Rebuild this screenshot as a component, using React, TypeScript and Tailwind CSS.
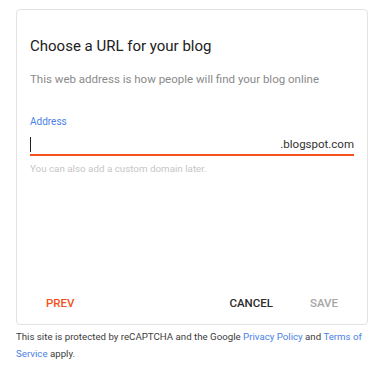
import React from "react";

export default function App() {
  return (
    <div className="w-[375px] h-[375px] bg-white pl-4 pt-[9px] font-['Roboto','Liberation_Sans',sans-serif] overflow-hidden">
      <div className="w-[352px] h-[316px] rounded-[4px] border border-[#e3e3e3] flex flex-col px-[13px]">
        <h1 className="mt-[26px] text-[15px] leading-5 text-[#212121] font-normal">Choose a URL for your blog</h1>
        <p className="mt-[15px] text-[11.5px] leading-4 text-[#8a8a8a]">This web address is how people will find your blog online</p>
        <label className="mt-[28px] text-[10px] leading-[14px] text-[#4a7fe8]">Address</label>
        <div className="mt-[5px] flex items-center h-[22px] border-b-2 border-[#f4511e]">
          <span className="w-px h-[15px] bg-[#212121] mt-[1px]" />
          <span className="ml-auto text-[11.5px] leading-5 text-[#333333]">.blogspot.com</span>
        </div>
        <p className="mt-[6px] text-[9.8px] leading-[14px] text-[#c6c6c6]">You can also add a custom domain later.</p>
        <div className="mt-auto mb-[13px] flex items-center">
          <button className="px-4 text-[11.5px] leading-4 font-medium text-[#f4511e]">PREV</button>
          <div className="ml-auto flex items-center gap-[5px]">
            <button className="px-4 text-[11.5px] leading-4 font-medium text-[#2b2b2b]">CANCEL</button>
            <button className="px-4 text-[11.5px] leading-4 font-medium text-[#a6a6a6]">SAVE</button>
          </div>
        </div>
      </div>
      <div className="mt-[3px] w-[350px] text-[9.7px] leading-[17px] text-[#3c3c3c]">
        <div>
          This site is protected by reCAPTCHA and the Google <span className="text-[#4a7fe8]">Privacy Policy</span> and <span className="text-[#4a7fe8]">Terms of</span>
        </div>
        <div>
          <span className="text-[#4a7fe8]">Service</span> apply.
        </div>
      </div>
    </div>
  );
}
